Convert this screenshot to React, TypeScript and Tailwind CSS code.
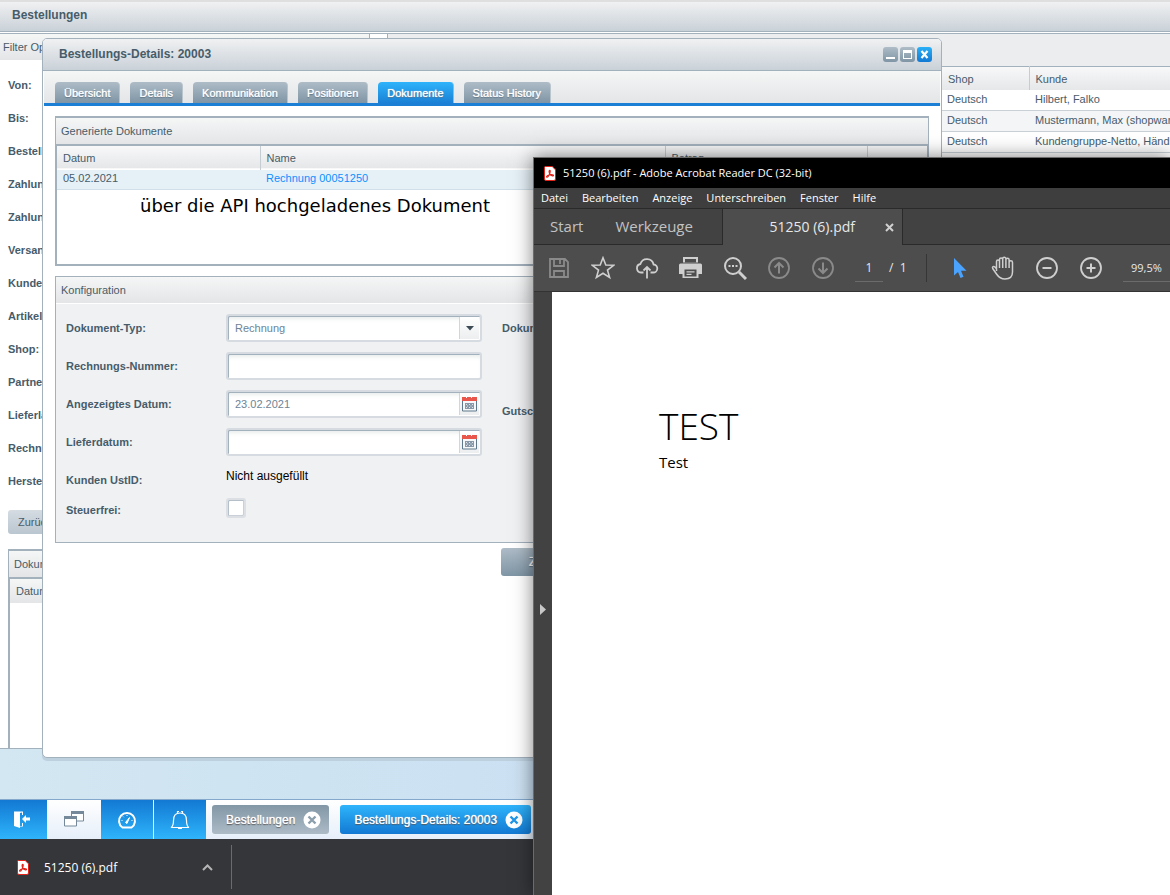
import type { ReactNode } from "react";

const filters = [
  "Von:",
  "Bis:",
  "Bestellstatus:",
  "Zahlungsstatus:",
  "Zahlungsart:",
  "Versandart:",
  "Kundengruppe:",
  "Artikel:",
  "Shop:",
  "Partner:",
  "Lieferland:",
  "Rechnungsland:",
  "Hersteller:",
];

const orders = [
  { shop: "Deutsch", customer: "Hilbert, Falko" },
  { shop: "Deutsch", customer: "Mustermann, Max (shopware AG)" },
  { shop: "Deutsch", customer: "Kundengruppe-Netto, Händler" },
];

const tabs = ["Übersicht", "Details", "Kommunikation", "Positionen", "Dokumente", "Status History"];

const menu = ["Datei", "Bearbeiten", "Anzeige", "Unterschreiben", "Fenster", "Hilfe"];

const label = "text-[11px] font-bold text-[#475c6a]";
const panelHead = "bg-linear-to-b from-[#f5f6f6] to-[#e3e5e7] text-[11px] text-[#475c6a]";
const titleBar = "bg-linear-to-b from-[#f0f1f2] to-[#c9d1d8] text-xs font-bold text-[#475c6a]";
const field =
  "flex h-7 w-64 items-center rounded-[3px] border-2 border-[#d6dbe1] bg-white pr-px shadow-[inset_1px_1px_0_#a3b1bd,inset_0_5px_4px_-2px_#e9eded]";

function PdfIcon() {
  return (
    <svg width="12" height="15" viewBox="0 0 12 15" className="shrink-0">
      <path d="M1.5.5h6.7l3.3 3.3v9.2a1.5 1.5 0 0 1-1.5 1.5H2A1.5 1.5 0 0 1 .5 13V1.500a1 1 0 0 1 1-1Z" fill="#fff" stroke="#e2231a" />
      <path
        d="M3.200 11.200c-1.300 0-.8-1.700 2.300-2.300 2.500-.5 4.200-.2 4 .7-.3 1-2.500.1-3.600-1.500C4.900 6.600 4.800 4.300 5.700 4.300c1.100 0 .4 2.700-.6 4.600-.7 1.400-1.300 2.300-1.900 2.300Z"
        fill="none"
        stroke="#e2231a"
        strokeWidth="1.100"
      />
    </svg>
  );
}

function CalendarButton({ name }: { name: string }) {
  return (
    <button aria-label={name} className="flex h-[22px] w-5 items-center justify-center border-l border-[#d0d6dc] bg-linear-to-b from-white to-[#eceeef]">
      <svg width="15" height="16" viewBox="0 0 15 16">
        <path d="M.5 4v11h14V4" fill="#f6f7f8" stroke="#5f788c" />
        <path d="M0 1h4v1h1V1h4v1h1V1h5v4H0z" fill="#e8564c" />
        <path d="M3 7h9v6H3z" fill="#8799a8" />
        <path d="M4 8h1v1H4zM7 8h1v1H7zM10 8h1v1h-1zM4 11h1v1H4zM7 11h1v1H7zM10 11h1v1h-1zM5 9.500h1v1H5zM8.500 9.500h1v1h-1z" fill="#dfe5ea" />
      </svg>
    </button>
  );
}

function FormRow({ id, text, children }: { id: string; text: string; children: ReactNode }) {
  return (
    <div className="flex h-[38px] items-center">
      <label htmlFor={id} className={`w-40 ${label}`}>{text}</label>
      {children}
    </div>
  );
}

function OrdersWindow() {
  return (
    <section className="mb-[50px] flex min-h-0 flex-1 flex-col border-b border-[#a3b1bd] bg-white">
      <h1 className={`h-8 border-t-2 border-b border-t-[#dfdfdf] border-b-[#a3b1bd] pl-3 leading-[26px] ${titleBar}`}>Bestellungen</h1>
      <div className="mt-px flex min-h-0 flex-1 border-t border-[#a3b1bd]">
        <aside className="flex w-[370px] shrink-0 flex-col border-r border-[#a3b1bd]">
          <h2 className={`h-[26px] pl-[3px] leading-[26px] ${panelHead}`}>Filter Optionen</h2>
          <form className="flex min-h-0 flex-1 flex-col items-start pt-[9px] pl-2">
            {filters.map((name, i) => (
              <div key={name} className="flex h-[33px] items-center">
                <label htmlFor={`filter-${i}`} className={`w-28 ${label}`}>{name}</label>
                <input id={`filter-${i}`} className="h-6 w-56 border border-[#d6dbe1]" />
              </div>
            ))}
            <button type="button" className="mt-3 h-6 shrink-0 rounded-[3px] bg-linear-to-b from-[#d5dce2] to-[#bac6d0] px-2.5 text-[11px] text-[#475c6a]">
              Zurücksetzen
            </button>
            <div className="mt-[15px] flex min-h-0 w-[350px] flex-1 flex-col border-x border-t-2 border-[#a3b1bd]">
              <h2 className={`h-7 shrink-0 border-b-2 border-[#a3b1bd] pl-[5px] leading-[26px] ${panelHead}`}>Dokumente</h2>
              <div className="flex-1 border-l border-[#a3b1bd]">
                <p className={`h-6 pl-[6px] leading-6 ${panelHead}`}>Datum</p>
              </div>
            </div>
          </form>
        </aside>
        <div className="ml-[17px] min-w-0 flex-1 border-l border-[#a3b1bd]">
          <div className="h-8 bg-[#ebedef]" />
          <table className="w-full table-fixed border-t border-[#a3b1bd] text-left text-[11px] text-[#475c6a]">
            <thead>
              <tr className="h-[23px] bg-linear-to-b from-[#f8f8f9] to-[#e5e7e9]">
                <th className="w-[554px]" />
                <th className="w-[87px] border-r border-[#c5cdd3] pt-0.5 pl-1.5 font-normal">Shop</th>
                <th className="pt-0.5 pl-1.5 font-normal">Kunde</th>
              </tr>
            </thead>
            <tbody>
              {orders.map((o) => (
                <tr key={o.customer} className="h-[21px] border-b border-[#c9d1d7] even:bg-[#f4f5f7]">
                  <td />
                  <td className="pb-0.5 pl-[5px]">{o.shop}</td>
                  <td className="pb-0.5 pl-1.5 whitespace-nowrap">{o.customer}</td>
                </tr>
              ))}
            </tbody>
          </table>
        </div>
      </div>
    </section>
  );
}

function DetailsWindow() {
  return (
    <section className="absolute top-[38px] left-[42px] flex h-[720px] w-[900px] flex-col overflow-hidden rounded-[5px] border border-[#a3b1bd] bg-white shadow-[0_3px_0_#bdd0de]">
      <header className={`flex h-8 shrink-0 items-center border-b border-[#a3b1bd] pr-[9px] pl-4 ${titleBar}`}>
        <h2 className="flex-1 pb-0.5">Bestellungs-Details: 20003</h2>
        <div className="flex gap-0.5">
          <button aria-label="Minimieren" className="flex h-[15px] w-[15px] justify-center rounded-[3px] bg-linear-to-b from-[#aebcc7] to-[#7f95a5]">
            <svg width="15" height="15"><path d="M3 10h9v2H3z" fill="#fff" /></svg>
          </button>
          <button aria-label="Maximieren" className="h-[15px] w-[15px] rounded-[3px] bg-linear-to-b from-[#aebcc7] to-[#7f95a5]">
            <svg width="15" height="15"><path d="M3 3h9v9H3zM4 6v5h7V6z" fill="#fff" fillRule="evenodd" /></svg>
          </button>
          <button aria-label="Schließen" className="h-[15px] w-[15px] rounded-[3px] bg-linear-to-b from-[#2bb0f7] to-[#1379d3]">
            <svg width="15" height="15"><path d="m4.500 4 6 7m0-7-6 7" stroke="#fff" strokeWidth="2.200" /></svg>
          </button>
        </div>
      </header>
      <nav className="mx-px flex h-[35px] shrink-0 items-end gap-[10px] border-b-[3px] border-[#1b80d5] bg-linear-to-b from-[#f5f6f6] to-[#e3e5e7] pl-[11px]">
        {tabs.map((tab) => (
          <button
            key={tab}
            className={`h-[21px] rounded-t-[4px] border-r px-[9px] pt-px text-[11px] text-white [text-shadow:0_0_1px_#fff,0_1px_1px_#4d6577] ${
              tab === "Dokumente"
                ? "border-[#7fc0f0] bg-linear-to-b from-[#2fb4fb] to-[#1b80d5]"
                : "border-[#b9c4cc] bg-linear-to-b from-[#aebcc7] to-[#7f95a5]"
            }`}
          >
            {tab}
          </button>
        ))}
      </nav>
      <div className="flex flex-1 flex-col pt-[10px] pr-3 pl-3">
        <div className="h-[150px] border-x border-y-2 border-[#a3b1bd]">
          <h3 className={`h-7 border-b-2 border-[#a3b1bd] pl-[5px] leading-[26px] ${panelHead}`}>Generierte Dokumente</h3>
          <div className="h-[118px] border-x border-[#a3b1bd]">
            <table className="w-full table-fixed text-left text-[11px] text-[#475c6a]">
              <thead>
                <tr className="h-[23px] border-b border-white bg-linear-to-b from-[#f8f8f9] to-[#e5e7e9]">
                  <th className="w-[203px] border-r border-[#c5cdd3] pt-0.5 pl-1.5 font-normal">Datum</th>
                  <th className="w-[405px] border-r border-[#c5cdd3] pt-0.5 pl-1.5 font-normal">Name</th>
                  <th className="w-[202px] border-r border-[#c5cdd3] pt-0.5 pl-1.5 font-normal">Betrag</th>
                  <th />
                </tr>
              </thead>
              <tbody>
                <tr className="h-5 border-b border-[#d0dfe8] bg-[#e6f1f7]">
                  <td className="pb-0.5 pl-1.5">05.02.2021</td>
                  <td className="pb-0.5 pl-1.5">
                    <a href="#rechnung" className="text-[#0d8fff]">Rechnung 00051250</a>
                  </td>
                  <td />
                  <td />
                </tr>
              </tbody>
            </table>
            <p className="pt-1 pl-[83px] font-['DejaVu_Sans',sans-serif] text-lg leading-6 text-black">über die API hochgeladenes Dokument</p>
          </div>
        </div>
        <div className="mt-[10px] h-[267px] border border-[#a3b1bd] bg-[#f0f1f3]">
          <h3 className={`h-[27px] border-b border-white pl-[5px] leading-[26px] ${panelHead}`}>Konfiguration</h3>
          <div className="flex gap-5 pt-[5px] pl-2.5">
            <form>
              <FormRow id="typ" text="Dokument-Typ:">
                <div className="relative">
                  <select id="typ" className={`${field} appearance-none pl-[7px] text-[11px] text-[#6c8497]`}>
                    <option>Rechnung</option>
                  </select>
                  <span className="pointer-events-none absolute top-[3px] right-[3px] flex h-[22px] w-5 items-center justify-center border-l border-[#d0d6dc] bg-linear-to-b from-white to-[#eceeef]">
                    <svg width="8" height="5"><path d="M0 0h8L4 4.500z" fill="#3d4b57" /></svg>
                  </span>
                </div>
              </FormRow>
              <FormRow id="nummer" text="Rechnungs-Nummer:">
                <input id="nummer" className={`${field} px-[7px] text-[11px] text-[#6c8497]`} />
              </FormRow>
              <FormRow id="datum" text="Angezeigtes Datum:">
                <div className={field}>
                  <input id="datum" defaultValue="23.02.2021" className="min-w-0 flex-1 pl-[7px] text-[11px] text-[#6c8497]" />
                  <CalendarButton name="Datum wählen" />
                </div>
              </FormRow>
              <FormRow id="lieferdatum" text="Lieferdatum:">
                <div className={field}>
                  <input id="lieferdatum" className="min-w-0 flex-1 pl-[7px] text-[11px] text-[#6c8497]" />
                  <CalendarButton name="Lieferdatum wählen" />
                </div>
              </FormRow>
              <div className="flex h-[38px] items-center">
                <span className={`w-40 ${label}`}>Kunden UstID:</span>
                <span className="pb-2 text-xs text-black">Nicht ausgefüllt</span>
              </div>
              <div className="flex h-[22px] items-center">
                <label htmlFor="steuerfrei" className={`w-40 ${label}`}>Steuerfrei:</label>
                <input
                  id="steuerfrei"
                  type="checkbox"
                  className="mb-1 h-5 w-5 appearance-none rounded-[3px] border-2 border-[#dcdfe3] bg-white shadow-[inset_1px_1px_0_#b4bfc9,inset_-1px_-1px_0_#c9d0d7]"
                />
              </div>
            </form>
            <div className={`flex flex-col gap-[45px] ${label}`}>
              <span className="leading-[38px]">Dokumentsprache:</span>
              <span className="leading-[38px]">Gutschrift:</span>
            </div>
          </div>
        </div>
        <button className="mt-[5px] ml-[446px] h-7 w-32 rounded-[3px] bg-linear-to-b from-[#aebcc7] to-[#7f95a5] pl-7 text-left text-xs text-white [text-shadow:0_0_1px_#fff,0_1px_1px_#4d6577]">
          Zurücksetzen
        </button>
      </div>
    </section>
  );
}

function Tool({ name, children, dim }: { name: string; children: ReactNode; dim?: boolean }) {
  return (
    <button aria-label={name} className={`flex h-6 w-6 shrink-0 items-center justify-center ${dim ? "text-[#8a8a8a]" : "text-[#cfcfcf]"}`}>
      <svg width="24" height="24" viewBox="0 0 24 24" fill="none" stroke="currentColor" strokeWidth="1.800">
        {children}
      </svg>
    </button>
  );
}

function AcrobatWindow() {
  return (
    <section className="absolute top-[157px] right-0 bottom-0 left-[533px] flex flex-col border-t border-l border-[#6b6b6b] bg-[#424242] font-['Open_Sans','Noto_Sans',sans-serif] shadow-[0_0_18px_rgba(0,0,0,0.5)]">
      <header className="flex h-[30px] shrink-0 items-center gap-[7px] bg-black pl-2.5 text-[11px] text-white">
        <PdfIcon />
        <h2 className="whitespace-nowrap">51250 (6).pdf - Adobe Acrobat Reader DC (32-bit)</h2>
      </header>
      <nav className="flex h-[21px] shrink-0 items-center gap-3.5 border-b border-[#2a2a2a] bg-[#3e3e3e] pl-[7px] text-[11px] text-white">
        {menu.map((item) => (
          <button key={item}>{item}</button>
        ))}
      </nav>
      <div className="flex h-9 shrink-0 text-[15px] text-[#c2c2c2]">
        <div className="flex w-[189px] items-center gap-8 border-r border-b border-[#2a2a2a] pl-4">
          <button>Start</button>
          <button>Werkzeuge</button>
        </div>
        <div className="flex w-[179px] items-center justify-end gap-[30px] bg-[#4d4d4d] pr-2 text-sm text-[#e8e8e8]">
          <span>51250 (6).pdf</span>
          <button aria-label="Tab schließen">
            <svg width="9" height="9"><path d="m1 1 7 7m0-7-7 7" stroke="#d0d0d0" strokeWidth="2" /></svg>
          </button>
        </div>
        <div className="flex-1 border-b border-l border-[#2a2a2a]" />
      </div>
      <div className="flex h-[47px] shrink-0 items-center overflow-hidden border-b border-[#333] bg-[#4d4d4d] pl-[13px] text-xs text-[#e8e8e8]">
        <div className="flex gap-5">
          <Tool name="Speichern" dim>
            <path d="M3 3h15l3 3v15H3zM7 3v7h10V3M13 4v4M7 21v-6h10v6" />
          </Tool>
          <Tool name="Favorit">
            <path d="m12 1.800 2.800 7.200 7.800.3-6.100 4.800 2.100 7.400-6.600-4.200-6.600 4.200 2.100-7.400-6.100-4.800 7.800-.3z" strokeWidth="1.600" />
          </Tool>
          <Tool name="Hochladen">
            <path d="M8.500 16.500H6a4.300 4.300 0 0 1-.6-8.500 6.800 6.800 0 0 1 13.200.5 4 4 0 0 1-.6 8h-2.500M12 22.500V11M8.500 14.500 12 11l3.500 3.500" />
          </Tool>
          <Tool name="Drucken">
            <path d="M4 1h15v5.500H4z" fill="currentColor" stroke="none" />
            <path d="M6 3h11v3.500H6z" fill="#4d4d4d" stroke="none" />
            <path d="M0 9a1.500 1.500 0 0 1 1.500-1.500h20A1.500 1.500 0 0 1 23 9v9h-3.500v4h-16v-4H0z" fill="currentColor" stroke="none" />
            <path d="M5.500 13.500h12v7h-12z" fill="#4d4d4d" stroke="none" />
            <path d="M7.500 15.800h8M7.500 18.300h5" strokeWidth="1.300" />
          </Tool>
          <Tool name="Suchen">
            <circle cx="10" cy="10" r="8" strokeWidth="2" />
            <path d="m16 16 7 7" strokeWidth="3" />
            <path d="M5.500 10h2M9 10h2M12.500 10h2" strokeWidth="2" />
          </Tool>
          <Tool name="Vorherige Seite" dim>
            <circle cx="12" cy="12" r="10" />
            <path d="M12 17.500V7M7.500 11.500 12 7l4.500 4.500" strokeWidth="2" />
          </Tool>
          <Tool name="Nächste Seite" dim>
            <circle cx="12" cy="12" r="10" />
            <path d="M12 6.500V17M7.500 12.500 12 17l4.500-4.500" strokeWidth="2" />
          </Tool>
        </div>
        <input aria-label="Seite" defaultValue="1" className="ml-5 h-7 w-7 shrink-0 border-b border-[#6b6b6b] text-center" />
        <span className="ml-1.5 w-10 shrink-0">/&nbsp; 1</span>
        <div className="-ml-[3px] h-7 w-px shrink-0 bg-[#363636]" />
        <div className="ml-5 flex gap-5">
          <Tool name="Auswahl">
            <path d="M7 2v17.500l4-3.500 2.500 6 3-1.200-2.500-6H19.500z" fill="#4aa3ff" stroke="none" />
          </Tool>
          <Tool name="Hand">
            <path
              d="M5.500 15V5.500a1.500 1.500 0 0 1 3 0V12M8.500 12V3.500a1.500 1.500 0 0 1 3.200 0V12M11.700 12V2.800a1.500 1.500 0 0 1 3.200 0V12M14.900 12V3.800a1.500 1.500 0 0 1 3.200 0V12M18.100 12V6.500a1.500 1.500 0 0 1 3.400 0V16c0 4.500-3 7-7.500 7-4.300 0-6.300-1.700-8.500-5l-3.800-5.500c-.9-1.700 1-2.700 2.200-1.500l1.800 2"
              strokeWidth="1.500"
            />
          </Tool>
          <Tool name="Verkleinern">
            <circle cx="12" cy="12" r="10" />
            <path d="M7.500 12h9" strokeWidth="2" />
          </Tool>
          <Tool name="Vergrößern">
            <circle cx="12" cy="12" r="10" />
            <path d="M7.500 12h9M12 7.500v9" strokeWidth="2" />
          </Tool>
        </div>
        <input aria-label="Zoom" defaultValue="99,5%" className="ml-5 h-7 w-16 shrink-0 border-b border-[#6b6b6b] pl-2 text-[11px]" />
      </div>
      <div className="flex min-h-0 flex-1">
        <button aria-label="Seitenleiste öffnen" className="flex w-[18px] shrink-0 items-center justify-center pt-8">
          <svg width="6" height="11"><path d="M0 0l6 5.500L0 11z" fill="#c8c8c8" /></svg>
        </button>
        <article className="flex-1 bg-white pt-[110px] pl-[107px] text-black">
          <h1 className="text-[37px] leading-[48px] font-light">TEST</h1>
          <p className="text-[15px] leading-6">Test</p>
        </article>
      </div>
    </section>
  );
}

function TaskButton({ text, active }: { text: string; active?: boolean }) {
  return (
    <button
      className={`flex h-[29px] items-center gap-2 rounded-[3px] pr-2 pl-3.5 text-xs text-white [text-shadow:0_0_1px_#fff,0_1px_1px_#444] ${
        active ? "bg-linear-to-b from-[#2fb4fb] to-[#1379d3]" : "bg-linear-to-b from-[#8297a6] to-[#adbbc6]"
      }`}
    >
      {text}
      <svg width="18" height="18" viewBox="0 0 18 18">
        <circle cx="9" cy="9" r="8.500" fill="#fff" />
        <path d="m5.500 5.500 7 7m0-7-7 7" stroke={active ? "#2196e8" : "#8c9fad"} strokeWidth="2.400" />
      </svg>
    </button>
  );
}

function Taskbar() {
  const blue = "flex items-center justify-center bg-linear-to-b from-[#1379d3] to-[#2fb4fb]";
  return (
    <nav className="flex h-10 shrink-0 items-stretch border-t border-[#83a8cc] bg-linear-to-b from-white to-[#e6effa]">
      <button aria-label="Abmelden" className={`w-[47px] pb-0.5 ${blue}`}>
        <svg width="18" height="18" viewBox="0 0 18 18" className="mr-1">
          <path d="M1 1.500h9V5H9V2.500L7 3v13h2v-3h1v3.500H7V18l-6-2z" fill="#fff" />
          <path d="m9 9 4-4v2.500h4v3h-4V13z" fill="#fff" />
        </svg>
      </button>
      <button aria-label="Fenster" className="flex w-[54px] items-center justify-center pb-0.5">
        <svg width="20" height="16" viewBox="0 0 20 16">
          <path d="M7.500 1v9h12V1z" fill="#fff" stroke="#75899a" />
          <path d="M7 0h13v3H7z" fill="#75899a" />
          <path d="M.5 6v9h12V6z" fill="#fff" stroke="#75899a" />
          <path d="M0 5h13v3H0z" fill="#75899a" />
        </svg>
      </button>
      <button aria-label="Dashboard" className={`w-[52px] ${blue}`}>
        <svg width="20" height="18" viewBox="0 0 20 18" fill="none" stroke="#fff">
          <path d="M5.500 16.500A8 8 0 1 1 14.500 16.500z" strokeWidth="2" strokeLinejoin="round" />
          <path d="m8.500 11.500 4-5-2.500 6z" fill="#fff" />
          <path d="M4.500 9.500h1M14.500 9.500h1M10 4v1M6 5.500l.7.700" />
        </svg>
      </button>
      <button aria-label="Benachrichtigungen" className={`ml-px w-[52px] ${blue}`}>
        <svg width="20" height="20" viewBox="0 0 20 20" fill="none" stroke="#fff" strokeWidth="1.200">
          <path d="M1 17.500h18c-2-1-2.500-3-2.500-7C16.500 5 14 3 10 3S3.500 5 3.500 10.500c0 4-.5 6-2.500 7ZM7.500 3V1.500h1.500M12.500 3V1.500H11M8 18.500h4" />
        </svg>
      </button>
      <div className="flex items-center gap-[11px] pl-1.5">
        <TaskButton text="Bestellungen" />
        <TaskButton text="Bestellungs-Details: 20003" active />
      </div>
    </nav>
  );
}

export default function App() {
  return (
    <main className="relative flex h-screen flex-col overflow-hidden bg-linear-to-r from-[#d2e7f1] to-[#c3d8f3] font-['Liberation_Sans',Arial,sans-serif]">
      <OrdersWindow />
      <Taskbar />
      <footer className="flex h-14 shrink-0 items-center bg-[#35363a] font-['Open_Sans','Noto_Sans',sans-serif] text-xs text-white">
        <div className="flex h-11 w-[232px] items-center border-r border-[#6a6b6e] pr-[18px] pl-[17px]">
          <PdfIcon />
          <span className="ml-[15px] flex-1 pt-0.5">51250 (6).pdf</span>
          <button aria-label="Mehr">
            <svg width="11" height="7"><path d="m1 6 4.500-4.500L10 6" fill="none" stroke="#b5b5b5" strokeWidth="2" /></svg>
          </button>
        </div>
      </footer>
      <DetailsWindow />
      <AcrobatWindow />
    </main>
  );
}
